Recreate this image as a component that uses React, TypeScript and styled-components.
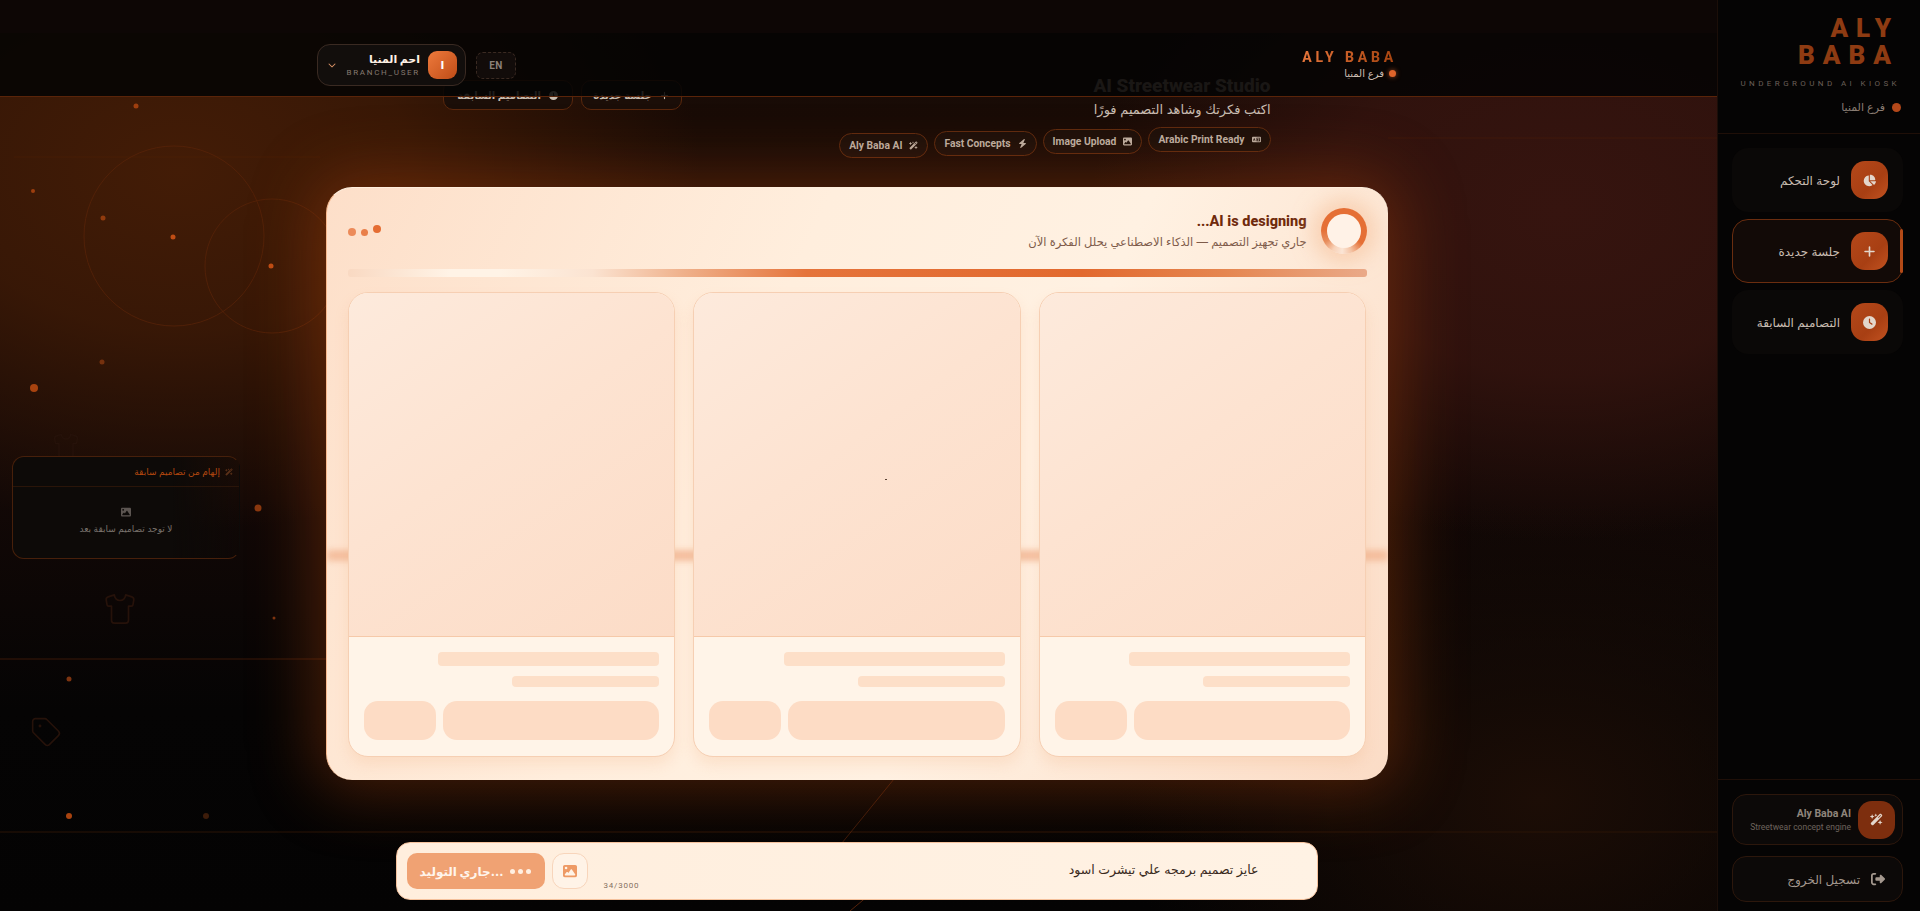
import React from "react";
import styled, { createGlobalStyle } from "styled-components";
import {
  FaBolt,
  FaChartPie,
  FaChevronDown,
  FaClock,
  FaImage,
  FaLanguage,
  FaPlus,
  FaRightFromBracket,
  FaWandMagicSparkles,
} from "react-icons/fa6";
import { Shirt, Tag } from "lucide-react";

const ARABIC = `"Inter", "DejaVu Sans", sans-serif`;
const LATIN = `"Roboto", "DejaVu Sans", sans-serif`;

const Global = createGlobalStyle`
  html, body { margin: 0; padding: 0; background: #050404; height: 911px; overflow: hidden; }
  * { box-sizing: border-box; }
  #root { height: 911px; }
`;

const Shell = styled.div`
  display: flex;
  width: 1920px;
  height: 911px;
  overflow: hidden;
  font-family: ${ARABIC};
`;

const Main = styled.main`
  position: relative;
  width: 1717px;
  height: 911px;
  display: flex;
  flex-direction: column;
  align-items: center;
  padding-right: 4px;
  overflow: hidden;
  background:
    radial-gradient(ellipse 520px 360px at 180px 170px, #431c06 0%, rgba(67, 28, 6, 0.75) 45%, rgba(67, 28, 6, 0) 100%),
    radial-gradient(ellipse 470px 330px at 1560px 210px, #36140f 0%, rgba(54, 20, 15, 0.8) 50%, rgba(54, 20, 15, 0) 100%),
    radial-gradient(ellipse 420px 300px at 1540px 800px, #1c0d06 0%, rgba(28, 13, 6, 0) 100%),
    linear-gradient(180deg, #1a0c06 0%, #120806 55%, #050404 78%, #040303 100%);
`;

const TopStrip = styled.div`
  position: absolute;
  inset: 0 0 auto 0;
  height: 33px;
  background: #0d0605;
  z-index: 3;
`;

const Backdrop = styled.svg`
  position: absolute;
  inset: 0;
  width: 1717px;
  height: 911px;
  pointer-events: none;
`;

const Topbar = styled.header`
  position: absolute;
  top: 33px;
  left: 0;
  right: 0;
  height: 64px;
  z-index: 4;
  display: flex;
  align-items: flex-start;
  justify-content: space-between;
  padding: 11px 321px 0 317px;
  background: rgba(3, 3, 3, 0.86);
  border-bottom: 1px solid #5a2409;
`;

const TopLeft = styled.div`
  display: flex;
  align-items: center;
  gap: 10px;
`;

const UserPill = styled.div`
  width: 149px;
  height: 42px;
  display: flex;
  align-items: center;
  justify-content: space-between;
  padding: 0 8px 0 10px;
  border: 1px solid #3a2a22;
  border-radius: 13px;
  background: #120e0c;
`;

const Chevron = styled(FaChevronDown)`
  width: 8px;
  height: 8px;
  color: #d99266;
`;

const UserMeta = styled.div`
  display: flex;
  flex: 1;
  flex-direction: column;
  align-items: flex-end;
  padding-right: 8px;
`;

const UserName = styled.span`
  font-size: 11px;
  font-weight: 800;
  line-height: 15px;
  color: #fff1e4;
`;

const UserRole = styled.span`
  font-family: ${LATIN};
  font-size: 8px;
  line-height: 11px;
  letter-spacing: 1.7px;
  color: #85796f;
`;

const Avatar = styled.div`
  width: 29px;
  height: 28px;
  display: grid;
  place-items: center;
  border-radius: 9px;
  background: linear-gradient(135deg, #ee7a3c, #bf4c17);
  color: #fff;
  font-size: 11px;
  font-weight: 700;
`;

const LangButton = styled.div`
  width: 40px;
  height: 27px;
  display: grid;
  place-items: center;
  border: 1px dashed #3a2a22;
  border-radius: 7px;
  background: #120c0a;
  font-family: ${LATIN};
  font-size: 10px;
  font-weight: 700;
  letter-spacing: 0.5px;
  color: #8c8078;
`;

const Brand = styled.div`
  display: flex;
  flex-direction: column;
  align-items: flex-end;
  padding-top: 5px;
`;

const BrandName = styled.span`
  font-family: ${LATIN};
  font-size: 14px;
  font-weight: 800;
  line-height: 17px;
  letter-spacing: 3.8px;
  margin-right: -1px;
  background: linear-gradient(90deg, #e4743a, #a5430f);
  -webkit-background-clip: text;
  background-clip: text;
  color: transparent;
`;

const BranchRow = styled.div`
  display: flex;
  align-items: center;
  gap: 5px;
  font-size: 10px;
  line-height: 14px;
  color: #cdbfb3;
`;

const BranchDot = styled.i<{ $size: number }>`
  width: ${(p) => p.$size}px;
  height: ${(p) => p.$size}px;
  border-radius: 50%;
  background: #e0642a;
  box-shadow: 0 0 5px rgba(224, 100, 42, 0.7);
`;

const Hero = styled.section`
  position: relative;
  z-index: 1;
  width: 828px;
  height: 187px;
  padding-top: 74px;
  flex: none;
  display: flex;
  justify-content: space-between;
  align-items: flex-start;
`;

const HeroActions = styled.div`
  display: flex;
  gap: 8px;
  margin-top: 6px;
`;

const HeroAction = styled.div<{ $w: number }>`
  width: ${(p) => p.$w}px;
  height: 30px;
  display: flex;
  align-items: center;
  justify-content: center;
  gap: 8px;
  border: 1px solid #5a280d;
  border-radius: 10px;
  background: #1b0e08;
  font-size: 10px;
  font-weight: 600;
  color: #c8bbae;
  svg {
    width: 9px;
    height: 9px;
  }
`;

const HeroText = styled.div`
  display: flex;
  flex-direction: column;
  align-items: flex-end;
`;

const HeroTitle = styled.h1`
  margin: 0;
  font-family: ${LATIN};
  font-size: 19px;
  font-weight: 800;
  line-height: 24px;
  color: #a58f82;
`;

const HeroSub = styled.p`
  margin: 0;
  font-size: 13px;
  line-height: 22px;
  color: #c9bdb2;
`;

const Chips = styled.div`
  display: flex;
  gap: 6px;
  margin-top: 7px;
  align-items: flex-start;
`;

const Chip = styled.div<{ $lift: number }>`
  height: 25px;
  display: flex;
  align-items: center;
  gap: 7px;
  padding: 0 9px;
  border: 1px solid #5e2a0f;
  border-radius: 13px;
  background: #1b0f0a;
  font-family: ${LATIN};
  font-size: 10.3px;
  font-weight: 700;
  color: #bdb0a4;
  transform: translateY(${(p) => p.$lift}px);
  svg {
    width: 9px;
    height: 9px;
  }
`;

const LoadingCard = styled.section`
  position: relative;
  z-index: 1;
  flex: none;
  width: 1062px;
  height: 593px;
  padding: 20px 21px 23px 21px;
  border-radius: 26px;
  border-top: 1px solid #ffeedd;
  border-left: 1px solid #f7b98f;
  overflow: hidden;
  background: linear-gradient(115deg, #fddfc9 0%, #ffeedd 38%, #fff1e2 62%, #fbdcc6 100%);
  box-shadow: 0 0 64px 12px rgba(190, 75, 15, 0.36);
  &::before {
    content: "";
    position: absolute;
    left: 0;
    right: 0;
    top: 362px;
    height: 11px;
    background: #f3b895;
    filter: blur(3px);
    opacity: 0.85;
  }
`;

const Speck = styled.i`
  position: absolute;
  left: 558px;
  top: 291px;
  width: 2px;
  height: 1px;
  z-index: 2;
  background: #5a4234;
`;

const CardHead = styled.div`
  position: relative;
  height: 46px;
  display: flex;
  justify-content: space-between;
  align-items: center;
`;

const Dots = styled.div`
  display: flex;
  align-items: center;
  gap: 5px;
`;

const Dot = styled.i<{ $size: number; $lift: number; $alpha: number }>`
  width: ${(p) => p.$size}px;
  height: ${(p) => p.$size}px;
  border-radius: 50%;
  background: #e56d33;
  opacity: ${(p) => p.$alpha};
  transform: translateY(${(p) => p.$lift}px);
`;

const HeadRight = styled.div`
  display: flex;
  align-items: center;
  gap: 14px;
`;

const HeadText = styled.div`
  display: flex;
  flex-direction: column;
  align-items: flex-end;
`;

const HeadTitle = styled.div`
  font-family: ${LATIN};
  font-size: 14.5px;
  font-weight: 800;
  line-height: 22px;
  color: #6f2a0c;
`;

const HeadSub = styled.div`
  font-size: 11.5px;
  line-height: 18px;
  color: #7e5b4a;
`;

const Ring = styled.div`
  width: 46px;
  height: 46px;
  border-radius: 50%;
  display: grid;
  place-items: center;
  background: conic-gradient(from 125deg, #e56f35 0deg, #f4c3a4 35deg, #fbe5d5 60deg, #f8d2b8 85deg, #e88d5c 115deg, #e56f35 150deg, #e56f35 360deg);
  box-shadow: 0 0 20px 9px rgba(246, 190, 150, 0.55);
  &::after {
    content: "";
    width: 34px;
    height: 34px;
    border-radius: 50%;
    background: #fff2e7;
  }
`;

const Progress = styled.div`
  position: relative;
  height: 8px;
  margin-top: 15px;
  border-radius: 3px;
  background: linear-gradient(90deg, #f9d9c2 0%, #fff3e6 10%, #fff3e6 15%, #fbe3d1 24%, #efb08a 33%, #e5733a 45%, #e2692e 72%, #e58650 86%, #eaa988 100%);
`;

const Slots = styled.div`
  position: relative;
  display: grid;
  grid-template-columns: repeat(3, 1fr);
  gap: 18px;
  margin-top: 15px;
  height: 465px;
`;

const Slot = styled.article`
  display: flex;
  flex-direction: column;
  overflow: hidden;
  border: 1px solid #f6cfb3;
  border-radius: 20px;
  background: #fff4e8;
  box-shadow: 0 8px 14px rgba(240, 170, 120, 0.2);
`;

const SlotImage = styled.div`
  height: 344px;
  flex: none;
  border-bottom: 1px solid #f6c9a9;
  background: linear-gradient(145deg, #fdeadc 0%, #fde3d1 45%, #fcdcc7 100%);
`;

const SlotBody = styled.div`
  flex: 1;
  display: flex;
  flex-direction: column;
  align-items: flex-end;
  padding: 15px 15px 0 15px;
`;

const Bar = styled.div<{ $w: number; $h: number; $gap: number }>`
  width: ${(p) => p.$w}px;
  height: ${(p) => p.$h}px;
  margin-bottom: ${(p) => p.$gap}px;
  border-radius: 4px;
  background: #fddfc8;
`;

const SlotButtons = styled.div`
  width: 100%;
  display: flex;
  gap: 7px;
`;

const SlotButton = styled.div<{ $w?: number }>`
  flex: ${(p) => (p.$w ? `0 0 ${p.$w}px` : "1")};
  height: 39px;
  border-radius: 14px;
  background: #fddcc5;
`;

const Composer = styled.section`
  position: relative;
  z-index: 1;
  flex: none;
  width: 922px;
  height: 58px;
  margin-top: 62px;
  display: flex;
  align-items: center;
  gap: 7px;
  padding: 0 58px 0 10px;
  border: 1px solid #f4c19c;
  border-radius: 14px;
  background: linear-gradient(90deg, #ffeedd, #fff2e4);
`;

const GenerateButton = styled.div`
  width: 138px;
  height: 36px;
  display: flex;
  align-items: center;
  justify-content: center;
  gap: 7px;
  border-radius: 10px;
  background: #f0a273;
  font-size: 12px;
  font-weight: 800;
  color: #fff5ec;
`;

const ButtonDots = styled.span`
  display: flex;
  gap: 3px;
  i {
    width: 5px;
    height: 5px;
    border-radius: 50%;
    background: #fff0e2;
  }
`;

const ImageButton = styled.div`
  width: 36px;
  height: 36px;
  display: grid;
  place-items: center;
  border: 1px solid #f8d5bb;
  border-radius: 12px;
  background: #fff3e7;
  color: #ee9a65;
  svg {
    width: 14px;
    height: 14px;
  }
`;

const Counter = styled.span`
  align-self: flex-end;
  margin: 0 0 9px 9px;
  font-family: ${LATIN};
  font-size: 8px;
  letter-spacing: 0.8px;
  color: #85705f;
`;

const Prompt = styled.div`
  flex: 1;
  text-align: right;
  font-size: 12.5px;
  margin-top: -4px;
  color: #3a2a20;
`;

const SidePanel = styled.aside`
  position: absolute;
  z-index: 1;
  left: 12px;
  top: 456px;
  width: 228px;
  height: 103px;
  border: 1px solid #47200b;
  border-right-color: transparent;
  border-radius: 12px;
  background: linear-gradient(90deg, #0d0a08 70%, rgba(13, 10, 8, 0.2));
`;

const SidePanelHead = styled.div`
  height: 30px;
  display: flex;
  align-items: center;
  justify-content: flex-end;
  gap: 5px;
  padding-right: 6px;
  border-bottom: 1px solid #2a1509;
  font-size: 9px;
  font-weight: 400;
  color: #b4480f;
  svg {
    width: 8px;
    height: 8px;
    color: #5a3018;
  }
`;

const SidePanelBody = styled.div`
  height: 72px;
  display: flex;
  flex-direction: column;
  align-items: center;
  justify-content: center;
  gap: 6px;
  padding-bottom: 6px;
  font-size: 9px;
  color: #79726c;
  svg {
    width: 10px;
    height: 10px;
    color: #5c5551;
  }
`;

const Sidebar = styled.nav`
  width: 203px;
  height: 911px;
  flex: none;
  display: flex;
  flex-direction: column;
  background: #050404;
  border-left: 1px solid #1b0e08;
`;

const SideBrand = styled.div`
  height: 134px;
  flex: none;
  display: flex;
  flex-direction: column;
  align-items: flex-end;
  padding: 15px 19px 0 0;
  border-bottom: 1px solid #1f0f08;
`;

const SideLogo = styled.div`
  width: 120px;
  margin-right: 2px;
  text-align: right;
  font-family: ${LATIN};
  font-size: 26px;
  font-weight: 900;
  line-height: 27px;
  letter-spacing: 8px;
  color: #8e3b12;
`;

const SideTag = styled.div`
  margin-top: 9px;
  margin-right: 1px;
  font-family: ${LATIN};
  font-size: 8px;
  line-height: 12px;
  letter-spacing: 3.4px;
  color: #6a5f57;
`;

const SideBranch = styled.div`
  margin-top: 10px;
  display: flex;
  align-items: center;
  gap: 7px;
  font-size: 11px;
  line-height: 14px;
  color: #8a7d73;
`;

const SideDot = styled.i`
  width: 9px;
  height: 9px;
  border-radius: 50%;
  background: #b3481a;
`;

const SideNav = styled.div`
  display: flex;
  flex-direction: column;
  gap: 7px;
  padding: 14px 17px 0 14px;
`;

const NavItem = styled.div<{ $active?: boolean }>`
  position: relative;
  height: 64px;
  display: flex;
  align-items: center;
  justify-content: flex-end;
  gap: 11px;
  padding-right: 14px;
  border: 1px solid ${(p) => (p.$active ? "#6a2d0f" : "transparent")};
  border-radius: 16px;
  background: ${(p) => (p.$active ? "#120a07" : "#0a0807")};
  font-size: 12px;
  font-weight: 400;
  color: #c9bdb2;
`;

const ActiveMark = styled.i`
  position: absolute;
  right: -1px;
  top: 9px;
  bottom: 9px;
  width: 3px;
  border-radius: 2px;
  background: #b34a17;
`;

const NavIcon = styled.span<{ $size?: number; $dim?: boolean }>`
  width: ${(p) => p.$size ?? 37}px;
  height: ${(p) => p.$size ?? 38}px;
  flex: none;
  display: grid;
  place-items: center;
  border-radius: 14px;
  background: ${(p) => (p.$dim ? "#7d2e0e" : "linear-gradient(135deg, #b4481a, #a83f13 60%, #c25220)")};
  color: #e3d6cb;
  svg {
    width: 13px;
    height: 13px;
  }
`;

const SideFoot = styled.div`
  margin-top: auto;
  height: 132px;
  flex: none;
  display: flex;
  flex-direction: column;
  gap: 11px;
  padding: 14px 17px 0 14px;
  border-top: 1px solid #1f0f08;
`;

const EngineCard = styled.div`
  height: 51px;
  display: flex;
  align-items: center;
  justify-content: flex-end;
  gap: 7px;
  padding-right: 7px;
  border: 1px solid #2c170c;
  border-radius: 14px;
  background: #0c0908;
`;

const EngineText = styled.div`
  display: flex;
  flex-direction: column;
  align-items: flex-end;
  font-family: ${LATIN};
`;

const EngineName = styled.span`
  font-size: 10.5px;
  font-weight: 700;
  line-height: 15px;
  color: #8f857c;
`;

const EngineSub = styled.span`
  font-size: 8.5px;
  line-height: 13px;
  color: #6d635c;
`;

const Logout = styled.div`
  height: 46px;
  display: flex;
  align-items: center;
  justify-content: flex-end;
  gap: 11px;
  padding-right: 17px;
  border: 1px solid #2c170c;
  border-radius: 14px;
  background: #0c0908;
  font-size: 12px;
  font-weight: 400;
  color: #a4988e;
  svg {
    width: 14px;
    height: 14px;
    order: 2;
  }
`;

const sparks: [number, number, number, string, number][] = [
  [136, 106, 2.5, "#a8430f", 0.9],
  [33, 191, 2, "#a8430f", 0.9],
  [103, 218, 2.5, "#a8430f", 0.8],
  [173, 237, 2.5, "#c04d14", 1],
  [271, 266, 2.5, "#c04d14", 1],
  [102, 362, 2.5, "#7d3410", 0.9],
  [34, 388, 4, "#a8430f", 1],
  [258, 508, 3.5, "#8a380f", 1],
  [274, 618, 1.5, "#7d3410", 1],
  [69, 679, 2.5, "#7d3410", 1],
  [69, 816, 3, "#a8430f", 1],
  [206, 816, 3, "#3d1c0a", 1],
];

const slots = [0, 1, 2];

export default function App() {
  return (
    <Shell>
      <Global />
      <Main>
        <Backdrop viewBox="0 0 1717 911">
          <line x1="14" y1="157" x2="320" y2="157" stroke="#5a2409" strokeOpacity="0.35" />
          <line x1="1388" y1="138" x2="1717" y2="138" stroke="#5a2409" strokeOpacity="0.35" />
          <line x1="0" y1="659" x2="330" y2="659" stroke="#3a1808" />
          <line x1="0" y1="832" x2="1717" y2="832" stroke="#2b1407" />
          <circle cx="174" cy="236" r="90" fill="none" stroke="#5a2409" strokeOpacity="0.7" />
          <circle cx="272" cy="266" r="67" fill="none" stroke="#5a2409" strokeOpacity="0.7" />
          {sparks.map(([x, y, r, c, o]) => (
            <circle key={`${x}-${y}`} cx={x} cy={y} r={r} fill={c} opacity={o} />
          ))}
          <line x1="955" y1="704" x2="820" y2="870" stroke="#6b2c0e" strokeOpacity="0.55" />
          <line x1="875" y1="890" x2="850" y2="911" stroke="#6b2c0e" strokeOpacity="0.8" />
          <Shirt x={52} y={432} width={28} height={28} strokeWidth={1.2} color="#26120a" />
          <Shirt x={103} y={592} width={34} height={34} strokeWidth={1.2} color="#26120a" />
          <Tag x={30} y={716} width={32} height={32} strokeWidth={1.2} color="#26120a" />
        </Backdrop>

        <TopStrip />

        <Topbar>
          <TopLeft>
            <UserPill>
              <Chevron />
              <UserMeta>
                <UserName>احم المنيا</UserName>
                <UserRole>BRANCH_USER</UserRole>
              </UserMeta>
              <Avatar>ا</Avatar>
            </UserPill>
            <LangButton>EN</LangButton>
          </TopLeft>
          <Brand>
            <BrandName>ALY BABA</BrandName>
            <BranchRow>
              فرع المنيا
              <BranchDot $size={7} />
            </BranchRow>
          </Brand>
        </Topbar>

        <Hero>
          <HeroActions>
            <HeroAction $w={130}>
              التصاميم السابقة
              <FaClock />
            </HeroAction>
            <HeroAction $w={101}>
              جلسة جديدة
              <FaPlus />
            </HeroAction>
          </HeroActions>
          <HeroText>
            <HeroTitle>AI Streetwear Studio</HeroTitle>
            <HeroSub>اكتب فكرتك وشاهد التصميم فورًا</HeroSub>
            <Chips>
              <Chip $lift={6}>
                Aly Baba AI
                <FaWandMagicSparkles />
              </Chip>
              <Chip $lift={4}>
                Fast Concepts
                <FaBolt />
              </Chip>
              <Chip $lift={2}>
                Image Upload
                <FaImage />
              </Chip>
              <Chip $lift={0}>
                Arabic Print Ready
                <FaLanguage />
              </Chip>
            </Chips>
          </HeroText>
        </Hero>

        <LoadingCard>
          <Speck />
          <CardHead>
            <Dots>
              <Dot $size={8} $lift={1} $alpha={0.75} />
              <Dot $size={7} $lift={1} $alpha={0.85} />
              <Dot $size={8} $lift={-2} $alpha={1} />
            </Dots>
            <HeadRight>
              <HeadText>
                <HeadTitle dir="rtl">AI is designing...</HeadTitle>
                <HeadSub>جاري تجهيز التصميم — الذكاء الاصطناعي يحلل الفكرة الآن</HeadSub>
              </HeadText>
              <Ring />
            </HeadRight>
          </CardHead>
          <Progress />
          <Slots>
            {slots.map((n) => (
              <Slot key={n}>
                <SlotImage />
                <SlotBody>
                  <Bar $w={221} $h={14} $gap={10} />
                  <Bar $w={147} $h={11} $gap={14} />
                  <SlotButtons>
                    <SlotButton $w={72} />
                    <SlotButton />
                  </SlotButtons>
                </SlotBody>
              </Slot>
            ))}
          </Slots>
        </LoadingCard>

        <Composer>
          <GenerateButton>
            جاري التوليد...
            <ButtonDots>
              <i />
              <i />
              <i />
            </ButtonDots>
          </GenerateButton>
          <ImageButton>
            <FaImage />
          </ImageButton>
          <Counter>34/3000</Counter>
          <Prompt>عايز تصميم برمجه علي تيشرت اسود</Prompt>
        </Composer>

        <SidePanel>
          <SidePanelHead>
            إلهام من تصاميم سابقة
            <FaWandMagicSparkles />
          </SidePanelHead>
          <SidePanelBody>
            <FaImage />
            لا توجد تصاميم سابقة بعد
          </SidePanelBody>
        </SidePanel>
      </Main>

      <Sidebar>
        <SideBrand>
          <SideLogo>ALY BABA</SideLogo>
          <SideTag>UNDERGROUND AI KIOSK</SideTag>
          <SideBranch>
            فرع المنيا
            <SideDot />
          </SideBranch>
        </SideBrand>

        <SideNav>
          <NavItem>
            لوحة التحكم
            <NavIcon>
              <FaChartPie />
            </NavIcon>
          </NavItem>
          <NavItem $active>
            جلسة جديدة
            <NavIcon>
              <FaPlus />
            </NavIcon>
            <ActiveMark />
          </NavItem>
          <NavItem>
            التصاميم السابقة
            <NavIcon>
              <FaClock />
            </NavIcon>
          </NavItem>
        </SideNav>

        <SideFoot>
          <EngineCard>
            <EngineText>
              <EngineName>Aly Baba AI</EngineName>
              <EngineSub>Streetwear concept engine</EngineSub>
            </EngineText>
            <NavIcon $dim>
              <FaWandMagicSparkles />
            </NavIcon>
          </EngineCard>
          <Logout>
            <FaRightFromBracket />
            تسجيل الخروج
          </Logout>
        </SideFoot>
      </Sidebar>
    </Shell>
  );
}
